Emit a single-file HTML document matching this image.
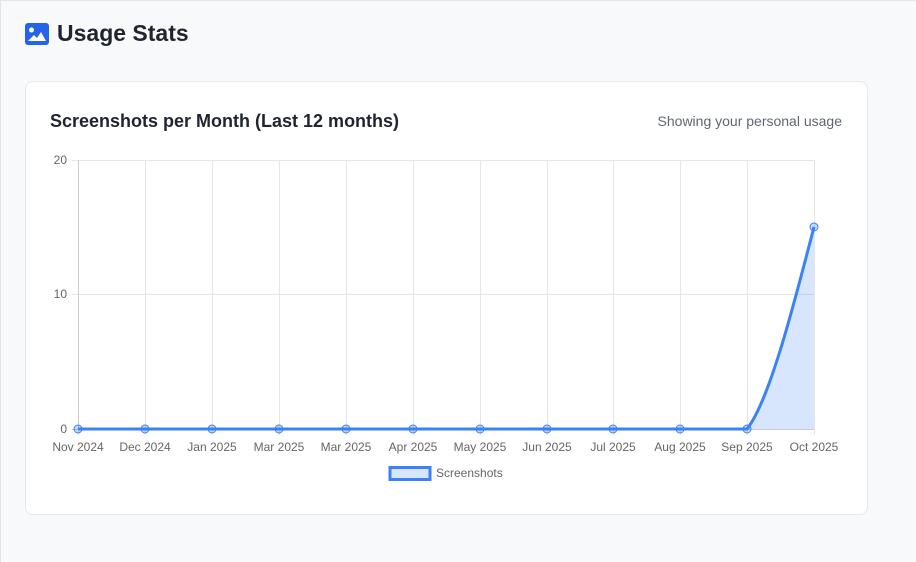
<!DOCTYPE html>
<html><head><meta charset="utf-8"><style>
html,body{margin:0;padding:0}
body{width:916px;height:562px;background:#f8f9fb;position:relative;overflow:hidden;font-family:"Liberation Sans",sans-serif}
.bt{position:absolute;left:0;top:0;width:916px;height:1px;background:#e3e5e8}
.bl{position:absolute;left:0;top:0;width:1px;height:562px;background:#e3e5e8}
.h{position:absolute;left:25px;top:20px;display:flex;align-items:center}
.h span{font-size:23px;font-weight:bold;color:#1f2430;margin-left:8px}
.card{position:absolute;left:25px;top:81px;width:841px;height:432px;background:#fff;border:1px solid #e5e7eb;border-radius:8px}
.t{position:absolute;left:50px;top:111px;font-size:18px;font-weight:bold;color:#1f2430}
.s{position:absolute;right:74px;top:113px;font-size:14px;color:#5f6670}
</style></head><body>
<div class="bt"></div><div class="bl"></div>
<div class="h"><svg width="24" height="22" viewBox="0 0 24 22"><rect x="0" y="0" width="24" height="22" rx="3" fill="#2563eb"/><circle cx="6.5" cy="7" r="2.5" fill="#fff"/><path d="M3 18 L9 12 L12 15 L16 9 L21 18 Z" fill="#fff"/></svg><span>Usage Stats</span></div>
<div class="card"></div>
<div class="t">Screenshots per Month (Last 12 months)</div>
<div class="s">Showing your personal usage</div>
<svg style="position:absolute;left:0;top:0" width="916" height="562" font-family="Liberation Sans, sans-serif" font-size="12" fill="#666">
<g stroke="#e5e5e5" stroke-width="1">
<line x1="72" y1="160.5" x2="814" y2="160.5"/><line x1="72" y1="294.5" x2="814" y2="294.5"/>
<line x1="78.5" y1="160" x2="78.5" y2="435"/><line x1="145.5" y1="160" x2="145.5" y2="435"/><line x1="212.5" y1="160" x2="212.5" y2="435"/><line x1="279.5" y1="160" x2="279.5" y2="435"/><line x1="346.5" y1="160" x2="346.5" y2="435"/><line x1="413.5" y1="160" x2="413.5" y2="435"/><line x1="480.5" y1="160" x2="480.5" y2="435"/><line x1="547.5" y1="160" x2="547.5" y2="435"/><line x1="613.5" y1="160" x2="613.5" y2="435"/><line x1="680.5" y1="160" x2="680.5" y2="435"/><line x1="747.5" y1="160" x2="747.5" y2="435"/><line x1="814.5" y1="160" x2="814.5" y2="435"/>
</g>
<line x1="72" y1="429.5" x2="814" y2="429.5" stroke="#ccc"/>
<line x1="78.5" y1="160" x2="78.5" y2="430" stroke="#ccc"/>
<text x="67" y="164" text-anchor="end">20</text><text x="67" y="298" text-anchor="end">10</text><text x="67" y="433" text-anchor="end">0</text>
<path d="M747 429 C770 400,795 300,814 227 L814 429 Z" fill="rgba(59,130,246,0.2)"/>
<path d="M78 429 L747 429 C770 400,795 300,814 227" fill="none" stroke="#3b82f6" stroke-width="3"/>
<g fill="rgba(59,130,246,0.3)" stroke="#3b82f6" stroke-width="1">
<circle cx="78" cy="429" r="4"/><circle cx="145" cy="429" r="4"/><circle cx="212" cy="429" r="4"/><circle cx="279" cy="429" r="4"/><circle cx="346" cy="429" r="4"/><circle cx="413" cy="429" r="4"/><circle cx="480" cy="429" r="4"/><circle cx="547" cy="429" r="4"/><circle cx="613" cy="429" r="4"/><circle cx="680" cy="429" r="4"/><circle cx="747" cy="429" r="4"/><circle cx="814" cy="227" r="4"/>
</g>
<g text-anchor="middle">
<text x="78" y="451">Nov 2024</text><text x="145" y="451">Dec 2024</text><text x="212" y="451">Jan 2025</text><text x="279" y="451">Mar 2025</text><text x="346" y="451">Mar 2025</text><text x="413" y="451">Apr 2025</text><text x="480" y="451">May 2025</text><text x="547" y="451">Jun 2025</text><text x="613" y="451">Jul 2025</text><text x="680" y="451">Aug 2025</text><text x="747" y="451">Sep 2025</text><text x="814" y="451">Oct 2025</text>
</g>
<rect x="390" y="467.5" width="40" height="12" fill="rgba(59,130,246,0.2)" stroke="#3b82f6" stroke-width="3"/>
<text x="436" y="477">Screenshots</text>
</svg>
</body></html>
